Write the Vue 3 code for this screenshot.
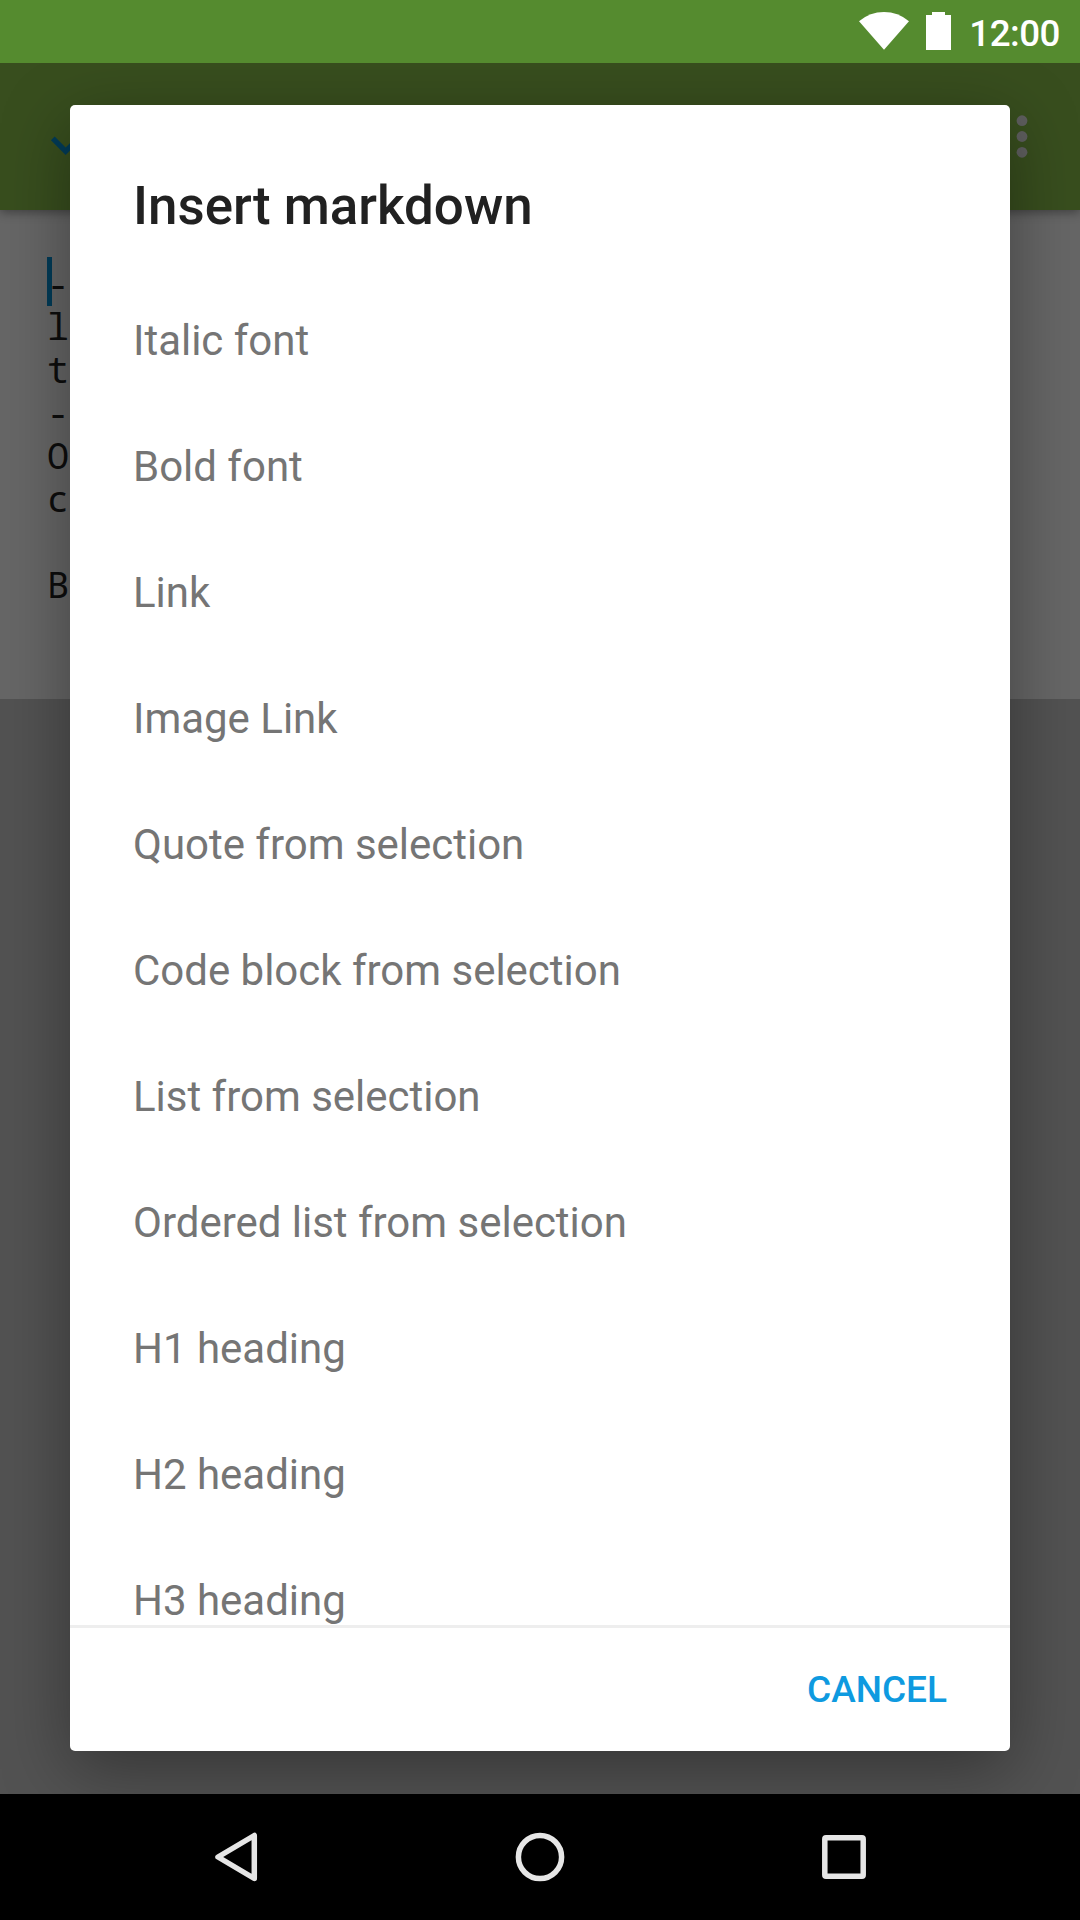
<script setup>
const options = [
  'Italic font',
  'Bold font',
  'Link',
  'Image Link',
  'Quote from selection',
  'Code block from selection',
  'List from selection',
  'Ordered list from selection',
  'H1 heading',
  'H2 heading',
  'H3 heading'
]
const lines = ['-', 'l', 't', '-', 'O', 'c', '', 'B']
</script>

<template>
  <div class="screen">
    <header class="status">
      <svg class="wifi" width="50" height="38" viewBox="0 0 50 38">
        <path d="M0 9.200Q11 0 25 0T50 9.200L25 37.700Z" fill="#fff" />
      </svg>
      <svg class="battery" width="25" height="38" viewBox="0 0 25 38">
        <path d="M6 0H19V3H25V38H0V3H6Z" fill="#fff" />
      </svg>
      <span class="clock">12:00</span>
    </header>

    <main class="window">
      <div class="toolbar">
        <svg width="63" height="63" viewBox="0 0 24 24">
          <path d="M9 16.170 4.830 12l-1.420 1.410L9 19 21 7l-1.410-1.410z" fill="#023b57" />
        </svg>
        <svg width="12" height="44" viewBox="0 0 12 44">
          <g fill="#5f5f5f">
            <circle cx="6" cy="5.700" r="5.400" />
            <circle cx="6" cy="21.500" r="5.400" />
            <circle cx="6" cy="37.300" r="5.400" />
          </g>
        </svg>
      </div>
      <div class="editor">
        <i class="caret"></i>
        <div v-for="(line, i) in lines" :key="i" class="line">{{ line }}</div>
      </div>

      <section class="dialog">
        <h1 class="title">Insert markdown</h1>
        <ul class="list">
          <li v-for="option in options" :key="option" class="option">{{ option }}</li>
        </ul>
        <footer class="actions">
          <button class="cancel">CANCEL</button>
        </footer>
      </section>
    </main>

    <nav class="nav">
      <svg width="50" height="50" viewBox="0 0 50 50">
        <path d="M43.300 3.500V46.500L7 25Z" />
      </svg>
      <svg width="50" height="50" viewBox="0 0 50 50">
        <circle cx="25" cy="25" r="21.600" />
      </svg>
      <svg width="50" height="50" viewBox="0 0 50 50">
        <rect x="5.800" y="5.800" width="38.400" height="38.400" rx="1.200" />
      </svg>
    </nav>
  </div>
</template>

<style>
body {
  margin: 0;
}
</style>

<style scoped>
.screen {
  width: 1080px;
  height: 1920px;
  display: flex;
  flex-direction: column;
  overflow: hidden;
  font-family: Roboto, sans-serif;
}
.status {
  height: 63px;
  flex: none;
  box-sizing: border-box;
  padding: 0 20px 1px 0;
  display: flex;
  justify-content: flex-end;
  align-items: center;
  background: #558b2f;
  color: #fff;
}
.wifi {
  margin-right: 17px;
}
.battery {
  margin-right: 18px;
}
.clock {
  font-size: 36.75px;
  line-height: 43px;
  font-weight: 500;
  letter-spacing: -0.5px;
  margin-top: 5px;
}
.window {
  position: relative;
  flex: 1;
  min-height: 0;
  overflow: hidden;
  background: #525252;
}
.toolbar {
  position: relative;
  z-index: 1;
  height: 147px;
  box-sizing: border-box;
  padding: 0 52px 0 42px;
  display: flex;
  align-items: center;
  justify-content: space-between;
  background: #384e1e;
  box-shadow: 0 2px 10px rgba(0, 0, 0, 0.4);
}
.editor {
  position: relative;
  height: 489px;
  box-sizing: border-box;
  padding: 52px 47px 0;
  background: #666;
  color: #0d0d0d;
  font-family: "Noto Sans Mono", "Liberation Mono", monospace;
  font-size: 36.75px;
}
.line {
  height: 43px;
  line-height: 43px;
}
.caret {
  position: absolute;
  left: 47px;
  top: 47px;
  width: 5px;
  height: 49px;
  background: #023b57;
}
.dialog {
  position: absolute;
  z-index: 2;
  left: 70px;
  top: 42px;
  width: 940px;
  height: 1646px;
  display: flex;
  flex-direction: column;
  background: #fff;
  border-radius: 5px;
  box-shadow: 0 18px 68px rgba(0, 0, 0, 0.36);
}
.title {
  flex: none;
  margin: 0;
  padding: 70px 63px 41px;
  font-size: 52.9px;
  line-height: 62px;
  font-weight: 500;
  color: #212121;
}
.list {
  flex: 1;
  min-height: 0;
  overflow: hidden;
  margin: 0;
  padding: 0;
  list-style: none;
}
.option {
  height: 126px;
  line-height: 126px;
  padding: 0 63px;
  font-size: 42px;
  letter-spacing: -0.015px;
  color: #757575;
}
.actions {
  height: 126px;
  flex: none;
  box-sizing: border-box;
  border-top: 3px solid #eee;
  padding: 0 63px;
  display: flex;
  align-items: center;
  justify-content: flex-end;
}
.cancel {
  border: 0;
  padding: 0;
  background: none;
  font: 500 37px/43px Roboto, sans-serif;
  color: #0e9ae0;
}
.nav {
  height: 126px;
  flex: none;
  display: flex;
  align-items: center;
  justify-content: center;
  gap: 254px;
  background: #000;
}
.nav path,
.nav circle,
.nav rect {
  fill: none;
  stroke: #e6e6e6;
  stroke-width: 5.5;
  stroke-linejoin: round;
}
</style>
